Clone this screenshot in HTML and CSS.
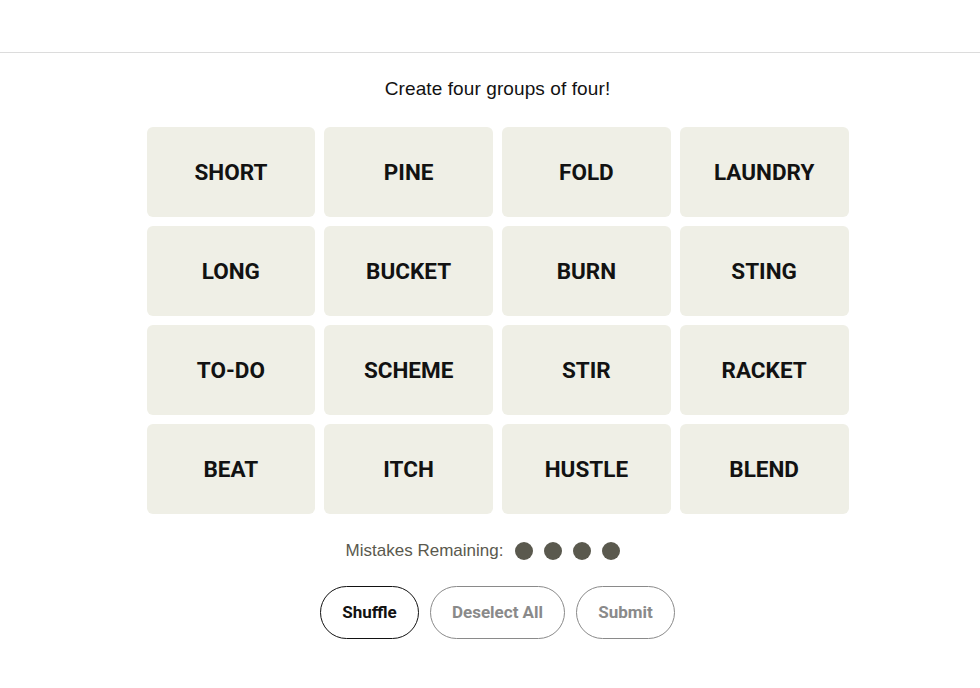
FILE: index.html
```html
<!DOCTYPE html>
<html lang="en">
<head>
<meta charset="utf-8">
<title>Connections</title>
<link rel="stylesheet" href="styles.css">
</head>
<body>
<header class="topbar"></header>
<main class="game">
  <p class="prompt">Create four groups of four!</p>
  <div class="board">
    <button class="tile">SHORT</button>
    <button class="tile">PINE</button>
    <button class="tile">FOLD</button>
    <button class="tile">LAUNDRY</button>
    <button class="tile">LONG</button>
    <button class="tile">BUCKET</button>
    <button class="tile">BURN</button>
    <button class="tile">STING</button>
    <button class="tile">TO-DO</button>
    <button class="tile">SCHEME</button>
    <button class="tile">STIR</button>
    <button class="tile">RACKET</button>
    <button class="tile">BEAT</button>
    <button class="tile">ITCH</button>
    <button class="tile">HUSTLE</button>
    <button class="tile">BLEND</button>
  </div>
  <div class="mistakes">
    <span class="mistakes-label">Mistakes Remaining:</span>
    <span class="dots">
      <span class="dot"></span><span class="dot"></span><span class="dot"></span><span class="dot"></span>
    </span>
  </div>
  <div class="actions">
    <button class="pill pill-active pill-shuffle">Shuffle</button>
    <button class="pill pill-deselect">Deselect All</button>
    <button class="pill pill-submit">Submit</button>
  </div>
</main>
</body>
</html>
```
FILE: styles.css
```css
* { box-sizing: border-box; }
html, body { margin: 0; padding: 0; background: #ffffff; }
body { font-family: "Liberation Sans", Arial, sans-serif; color: #121212; }

.topbar {
  height: 53px;
  border-bottom: 1px solid #dcdcdc;
}

.game {
  display: flex;
  flex-direction: column;
  align-items: center;
  padding-left: 15px;
}

.prompt {
  margin: 25px 0 0;
  font-family: "Liberation Sans", Arial, sans-serif;
  font-size: 19px;
  line-height: 22px;
  color: #121212;
  letter-spacing: 0.1px;
}

.board {
  margin-top: 27px;
  width: 702px;
  display: grid;
  grid-template-columns: repeat(4, 1fr);
  grid-auto-rows: 90px;
  gap: 9px;
}

.tile {
  border: none;
  border-radius: 6px;
  background: #efefe6;
  color: #121212;
  font-family: Roboto, "Liberation Sans", sans-serif;
  font-weight: 700;
  font-size: 22.5px;
  text-transform: uppercase;
  padding: 0 0 1px;
  cursor: pointer;
}

.mistakes {
  margin-top: 28px;
  margin-right: 29px;
  height: 18px;
  display: flex;
  align-items: center;
  gap: 12px;
}

.mistakes-label {
  font-size: 17px;
  color: #5a594e;
}

.dots { display: flex; gap: 11px; }
.dot {
  width: 18px;
  height: 18px;
  border-radius: 50%;
  background: #5a594e;
}

.actions {
  margin-top: 26px;
  display: flex;
  gap: 11px;
}

.pill {
  height: 53px;
  border-radius: 27px;
  background: #ffffff;
  border: 1px solid #8a8a8a;
  color: #8a8a8a;
  font-family: Roboto, "Liberation Sans", sans-serif;
  font-weight: 700;
  font-size: 17px;
  padding: 0 0 1px;
  cursor: pointer;
}
.pill-active { border-color: #121212; color: #121212; }
.pill-shuffle { width: 99px; }
.pill-deselect { width: 135px; }
.pill-submit { width: 99px; }
```
